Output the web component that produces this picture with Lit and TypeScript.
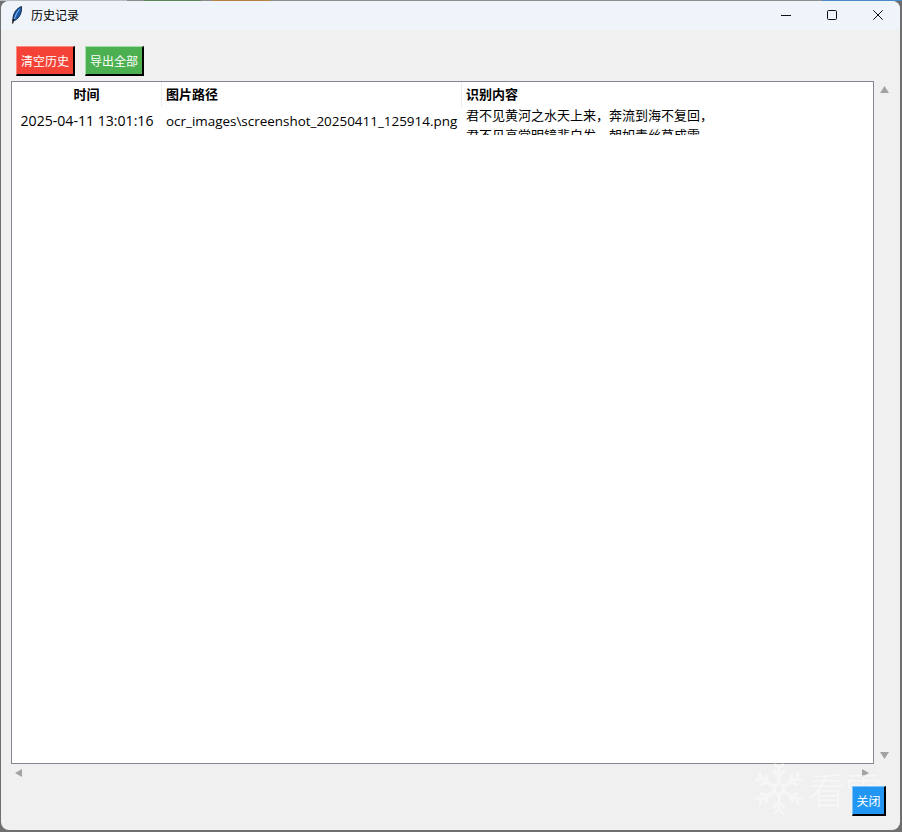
import { LitElement, html, css, svg } from "lit";
import { customElement } from "lit/decorators.js";

@customElement("app-root")
export class AppRoot extends LitElement {
  static styles = css`
    :host {
      display: block;
      width: 902px;
      height: 832px;
      background: #6f6f6f;
      position: relative;
      overflow: hidden;
      font-family: "Open Sans", "Noto Sans CJK SC", sans-serif;
      color: #000;
    }
    .strip { display: flex; height: 1px; }
    .strip i { display: block; height: 1px; }
    .window {
      position: absolute;
      left: 1px;
      top: 1px;
      width: 899px;
      height: 829px;
      background: #f0f0f0;
      border-radius: 8px;
      overflow: hidden;
      display: flex;
      flex-direction: column;
    }
    .titlebar {
      height: 29px;
      flex: none;
      background: #eff3fa;
      display: flex;
      align-items: center;
    }
    .app-icon { margin-left: 9px; width: 14px; height: 18px; flex: none; margin-top: -1px; }
    .title { margin-left: 7px; margin-top: -2px; font-size: 12px; line-height: 16px; flex: 1; font-family: "Noto Sans CJK SC", sans-serif; }
    .win-btn { width: 46px; height: 29px; display: flex; align-items: center; justify-content: center; flex: none; margin-top: -1px; }
    .win-btn.last { margin-right: -1px; }
    .toolbar { display: flex; gap: 10px; padding: 16px 0 0 15px; height: 35px; flex: none; box-sizing: content-box; }
    .btn {
      box-sizing: border-box;
      height: 30px;
      color: #fff;
      font-size: 12px;
      display: flex;
      align-items: center;
      justify-content: center;
      border-style: solid;
      border-width: 1px 2px 2px 1px;
      font-family: "Noto Sans CJK SC", sans-serif;
    }
    .red { width: 59px; background: #f44336; border-color: #fb8a82 #000 #000 #fb8a82; }
    .green { width: 59px; background: #4caf50; border-color: #a6dca8 #000 #000 #a6dca8; }
    .blue { width: 34px; height: 30px; background: #2196f3; border-color: #7cc3f9 #000 #000 #7cc3f9; position: relative; z-index: 2; }
    .main { display: flex; height: 683px; flex: none; margin-left: 10px; }
    .table {
      width: 863px;
      height: 683px;
      box-sizing: border-box;
      background: #fff;
      border: 1px solid #828790;
      flex: none;
    }
    .head, .row { display: grid; grid-template-columns: 150px 300px 1fr; }
    .head { height: 25px; font-weight: 700; font-size: 13px; line-height: 23px; }
    .head div { box-sizing: border-box; padding-left: 4px; border-right: 1px solid #ededed; font-family: "Noto Sans CJK SC", sans-serif; }
    .head div:last-child { border-right: 0; }
    .head .c { text-align: center; padding-left: 0; }
    .row { height: 28px; overflow: hidden; font-size: 13.45px; }
    .cell { padding-left: 4px; line-height: 28px; white-space: nowrap; }
    .cell.t { text-align: center; padding-left: 0; font-size: 14.1px; }
    .cell.wrap { font-size: 13px; line-height: 20px; margin-top: -2px; font-family: "Noto Sans CJK SC", sans-serif; }
    .vscroll { width: 20px; height: 683px; display: flex; flex-direction: column; align-items: center; justify-content: space-between; padding: 4px 0 3px; box-sizing: border-box; }
    .hscroll { height: 18px; width: 863px; margin-left: 10px; display: flex; align-items: center; justify-content: space-between; padding: 0 3px; box-sizing: border-box; flex: none; }
    .footer { display: flex; justify-content: flex-end; padding: 4px 14px 0 0; flex: none; }
    .mark { position: absolute; left: 753px; top: 763px; display: flex; align-items: center; gap: 3px; color: rgba(255,255,255,.5); pointer-events: none; }
    .mark span { font-size: 37px; line-height: 46px; font-family: "Noto Sans CJK SC", sans-serif; font-weight: 300; white-space: nowrap; }
  `;

  private tri(d: string) {
    return html`<svg width="11" height="10" viewBox="0 0 11 10"><path d=${d} fill="#a3a3a3"></path></svg>`;
  }

  render() {
    const flake = svg`
      <g stroke="#fff" stroke-opacity=".38" fill="none" stroke-width="3.2">
        <circle cx="26" cy="26" r="5"/>
        ${[0, 60, 120, 180, 240, 300].map(a => svg`<g transform="rotate(${a} 26 26)"><path d="M26 20V3M20 7l6 6 6-6M21 1l5 4 5-4"/></g>`)}
      </g>`;
    return html`
      <div class="strip">
        <i style="width:127px;background:#b9bcc2"></i><i style="width:17px;background:#8b8b8b"></i><i style="width:57px;background:#5d8658"></i><i style="width:11px;background:#8b8b8b"></i><i style="width:58px;background:#b5813e"></i><i style="width:552px;background:#8e8e8e"></i><i style="width:80px;background:#4a88c7"></i>
      </div>
      <div class="window">
        <div class="titlebar">
          <svg class="app-icon" viewBox="0 0 14 18">
            <path d="M11.5 .5C7 2 3.5 6.5 3 12l-.3 3 2-.5C9.500 12 12 7 11.500.5z" fill="#1a5aa8" stroke="#0c2340" stroke-width=".9"></path>
            <path d="M9.500 3.500C7 6 5.500 9.500 4.500 13" stroke="#9cc3ea" stroke-width="1" fill="none"></path>
            <path d="M3.800 13l-1.300 4.500" stroke="#111" stroke-width="1.200"></path>
          </svg>
          <div class="title">历史记录</div>
          <div class="win-btn">
            <svg width="10" height="10" viewBox="0 0 10 10"><path d="M0 5.500h10" stroke="#111" stroke-width="1"></path></svg>
          </div>
          <div class="win-btn">
            <svg width="10" height="10" viewBox="0 0 10 10"><rect x=".5" y=".5" width="9" height="9" rx="1.200" fill="none" stroke="#111"></rect></svg>
          </div>
          <div class="win-btn last">
            <svg width="10" height="10" viewBox="0 0 10 10"><path d="M.3.3l9.400 9.400M9.700.3L.3 9.700" stroke="#111" stroke-width="1"></path></svg>
          </div>
        </div>
        <div class="toolbar">
          <div class="btn red">清空历史</div>
          <div class="btn green">导出全部</div>
        </div>
        <div class="main">
          <div class="table">
            <div class="head">
              <div class="c">时间</div>
              <div>图片路径</div>
              <div>识别内容</div>
            </div>
            <div class="row">
              <div class="cell t">2025-04-11 13:01:16</div>
              <div class="cell">ocr_images\\screenshot_20250411_125914.png</div>
              <div class="cell wrap">君不见黄河之水天上来，奔流到海不复回，<br />君不见高堂明镜悲白发，朝如青丝暮成雪。</div>
            </div>
          </div>
          <div class="vscroll">
            ${this.tri("M5.500 1L10 8H1z")}
            ${this.tri("M1 1h9L5.500 8z")}
          </div>
        </div>
        <div class="hscroll">
          ${this.tri("M8 1v8L1 5z")}
          ${this.tri("M2 1v8l7-4z")}
        </div>
        <div class="footer"><div class="btn blue">关闭</div></div>
      </div>
      <div class="mark">
        <svg width="52" height="52" viewBox="0 0 52 52">${flake}</svg>
        <span>看雪</span>
      </div>
    `;
  }
}
